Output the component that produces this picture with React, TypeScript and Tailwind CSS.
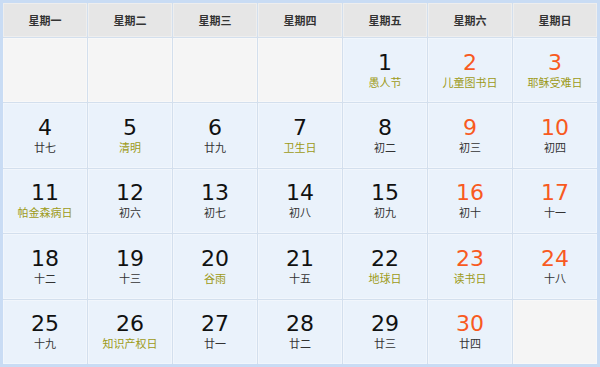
import React from 'react';

type Day = { d: number; sub: string; fest?: boolean; weekend?: boolean } | null;

const heads = ['星期一', '星期二', '星期三', '星期四', '星期五', '星期六', '星期日'];

const days: Day[] = [
    null, null, null, null,
    { d: 1, sub: '愚人节', fest: true },
    { d: 2, sub: '儿童图书日', fest: true, weekend: true },
    { d: 3, sub: '耶稣受难日', fest: true, weekend: true },
    { d: 4, sub: '廿七' },
    { d: 5, sub: '清明', fest: true },
    { d: 6, sub: '廿九' },
    { d: 7, sub: '卫生日', fest: true },
    { d: 8, sub: '初二' },
    { d: 9, sub: '初三', weekend: true },
    { d: 10, sub: '初四', weekend: true },
    { d: 11, sub: '帕金森病日', fest: true },
    { d: 12, sub: '初六' },
    { d: 13, sub: '初七' },
    { d: 14, sub: '初八' },
    { d: 15, sub: '初九' },
    { d: 16, sub: '初十', weekend: true },
    { d: 17, sub: '十一', weekend: true },
    { d: 18, sub: '十二' },
    { d: 19, sub: '十三' },
    { d: 20, sub: '谷雨', fest: true },
    { d: 21, sub: '十五' },
    { d: 22, sub: '地球日', fest: true },
    { d: 23, sub: '读书日', fest: true, weekend: true },
    { d: 24, sub: '十八', weekend: true },
    { d: 25, sub: '十九' },
    { d: 26, sub: '知识产权日', fest: true },
    { d: 27, sub: '廿一' },
    { d: 28, sub: '廿二' },
    { d: 29, sub: '廿三' },
    { d: 30, sub: '廿四', weekend: true },
    null,
];

export default function App() {
    return (
        <div className="w-[600px] h-[367px] bg-white">
            <div className="h-full border-[3px] border-[#c9dcf4]">
                <div className="h-full grid grid-cols-7 grid-rows-[34px_repeat(5,1fr)] gap-px bg-[#d3dfed]">
                    {heads.map((h) => (
                        <div
                            key={h}
                            className="flex items-center justify-center bg-[#e6e6e6] border border-[#eeeeee] text-[11px] font-bold text-[#333] font-['Noto_Sans_CJK_SC',sans-serif]"
                        >
                            {h}
                        </div>
                    ))}
                    {days.map((day, i) =>
                        day ? (
                            <div
                                key={i}
                                className="flex flex-col items-center justify-center bg-[#eaf2fb] border border-[#f1f6fc]"
                            >
                                <div
                                    className={`text-[22px] leading-[24px] font-['DejaVu_Sans',sans-serif] ${
                                        day.weekend ? 'text-[#f85a1f]' : 'text-[#111]'
                                    }`}
                                >
                                    {day.d}
                                </div>
                                <div
                                    className={`text-[11px] leading-[15px] font-['Noto_Sans_CJK_SC',sans-serif] ${
                                        day.fest ? 'text-[#9d9a17]' : 'text-[#333]'
                                    }`}
                                >
                                    {day.sub}
                                </div>
                            </div>
                        ) : (
                            <div key={i} className="bg-[#f5f5f5] border border-[#f8f8f8]" />
                        )
                    )}
                </div>
            </div>
        </div>
    );
}
